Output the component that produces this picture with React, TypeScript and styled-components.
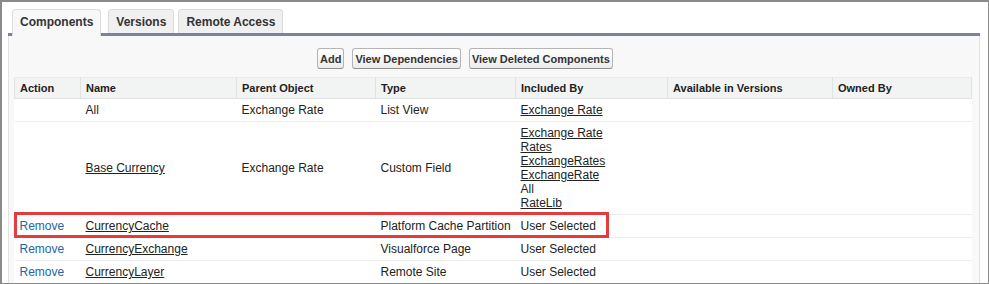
import React from "react";
import styled, { createGlobalStyle } from "styled-components";

const Global = createGlobalStyle`
  html, body { margin: 0; padding: 0; background: #fff; }
  body { font-family: "Liberation Sans", Arial, sans-serif; }
`;

const Frame = styled.div`
  box-sizing: border-box;
  width: 989px;
  height: 284px;
  border-top: 2px solid #8a8a8a;
  border-left: 2px solid #8a8a8a;
  border-right: 1px solid #8a8a8a;
  border-bottom: 1px solid #8a8a8a;
  padding: 7px 8px 0 6px;
  overflow: hidden;
  background: #fff;
  display: flex;
  flex-direction: column;
`;

const TabBar = styled.div`
  display: flex;
  align-items: flex-end;
  padding-left: 4px;
  border-bottom: 3px solid #7a849f;
  height: 24px;
`;

const Tab = styled.div<{ $active?: boolean; $gap: number }>`
  box-sizing: border-box;
  height: ${(p) => (p.$active ? 27 : 24)}px;
  margin-bottom: ${(p) => (p.$active ? -3 : 0)}px;
  margin-right: ${(p) => p.$gap}px;
  padding: 0 7px;
  padding-bottom: ${(p) => (p.$active ? 3 : 0)}px;
  display: flex;
  align-items: center;
  font-size: 12px;
  font-weight: bold;
  color: #333;
  background: ${(p) => (p.$active ? "#f8f8f8" : "#f0f0f0")};
  border: 1px solid #dcdcdc;
  border-bottom: none;
  border-radius: 4px 4px 0 0;
`;

const Panel = styled.div`
  flex: 1;
  background: #f8f8f8;
  border-left: 1px solid #e2e2e2;
  border-right: 1px solid #e2e2e2;
  padding: 0 8px 0 5px;
  display: flex;
  flex-direction: column;
`;

const ButtonRow = styled.div`
  display: flex;
  gap: 8px;
  padding: 12px 0 0 303px;
  height: 21px;
  margin-bottom: 8px;
`;

const Button = styled.button`
  box-sizing: border-box;
  height: 21px;
  padding: 0 2px;
  font-family: "Liberation Sans", Arial, sans-serif;
  font-size: 11px;
  font-weight: bold;
  color: #333;
  background: linear-gradient(#ffffff, #ececec);
  border: 1px solid #b5b5b5;
  border-bottom-color: #8f8f8f;
  border-radius: 3px;
  cursor: pointer;
`;

const TableWrap = styled.div`
  position: relative;
`;

const Table = styled.table`
  width: 957px;
  table-layout: fixed;
  border-collapse: collapse;
  background: #fff;
  font-size: 12px;
  color: #222;
`;

const Th = styled.th`
  background: #f2f3f3;
  border: 1px solid #e0e3e5;
  border-top-color: #eaeaea;
  padding: 3px 5px;
  line-height: 14px;
  text-align: left;
  font-size: 11px;
  font-weight: bold;
  color: #222;
`;

const Td = styled.td`
  padding: 4px 5px;
  line-height: 14px;
  border-bottom: 1px solid #ececec;
  vertical-align: middle;
  white-space: nowrap;
`;

const Link = styled.a`
  color: #222;
  text-decoration: underline;
`;

const ActionLink = styled.a`
  color: #2265a3;
  text-decoration: none;
`;

const Stack = styled.div`
  display: flex;
  flex-direction: column;
`;

const Highlight = styled.div`
  position: absolute;
  left: 0;
  top: 135px;
  width: 595px;
  height: 26px;
  box-sizing: border-box;
  border: 3px solid #e23c3c;
  pointer-events: none;
`;

const cols = [66, 156, 139, 140, 152, 165, 139];
const headers = ["Action", "Name", "Parent Object", "Type", "Included By", "Available in Versions", "Owned By"];

type Row = {
  action?: string;
  name: string;
  nameLink: boolean;
  parent: string;
  type: string;
  included: { text: string; link: boolean }[];
};

const rows: Row[] = [
  { name: "All", nameLink: false, parent: "Exchange Rate", type: "List View", included: [{ text: "Exchange Rate", link: true }] },
  {
    name: "Base Currency",
    nameLink: true,
    parent: "Exchange Rate",
    type: "Custom Field",
    included: [
      { text: "Exchange Rate", link: true },
      { text: "Rates", link: true },
      { text: "ExchangeRates", link: true },
      { text: "ExchangeRate", link: true },
      { text: "All", link: false },
      { text: "RateLib", link: true },
    ],
  },
  { action: "Remove", name: "CurrencyCache", nameLink: true, parent: "", type: "Platform Cache Partition", included: [{ text: "User Selected", link: false }] },
  { action: "Remove", name: "CurrencyExchange", nameLink: true, parent: "", type: "Visualforce Page", included: [{ text: "User Selected", link: false }] },
  { action: "Remove", name: "CurrencyLayer", nameLink: true, parent: "", type: "Remote Site", included: [{ text: "User Selected", link: false }] },
];

export default function App() {
  return (
    <>
      <Global />
      <Frame>
        <TabBar>
          <Tab $active $gap={7}>Components</Tab>
          <Tab $gap={4}>Versions</Tab>
          <Tab $gap={0}>Remote Access</Tab>
        </TabBar>
        <Panel>
          <ButtonRow>
            <Button>Add</Button>
            <Button>View Dependencies</Button>
            <Button>View Deleted Components</Button>
          </ButtonRow>
          <TableWrap>
            <Table>
              <colgroup>
                {cols.map((w, i) => (
                  <col key={i} style={{ width: w }} />
                ))}
              </colgroup>
              <thead>
                <tr>
                  {headers.map((h) => (
                    <Th key={h}>{h}</Th>
                  ))}
                </tr>
              </thead>
              <tbody>
                {rows.map((r) => (
                  <tr key={r.name}>
                    <Td>{r.action ? <ActionLink href="#">{r.action}</ActionLink> : null}</Td>
                    <Td>{r.nameLink ? <Link href="#">{r.name}</Link> : r.name}</Td>
                    <Td>{r.parent}</Td>
                    <Td>{r.type}</Td>
                    <Td>
                      <Stack>
                        {r.included.map((it, i) =>
                          it.link ? (
                            <span key={i}>
                              <Link href="#">{it.text}</Link>
                            </span>
                          ) : (
                            <span key={i}>{it.text}</span>
                          )
                        )}
                      </Stack>
                    </Td>
                    <Td />
                    <Td />
                  </tr>
                ))}
              </tbody>
            </Table>
            <Highlight />
          </TableWrap>
        </Panel>
      </Frame>
    </>
  );
}
